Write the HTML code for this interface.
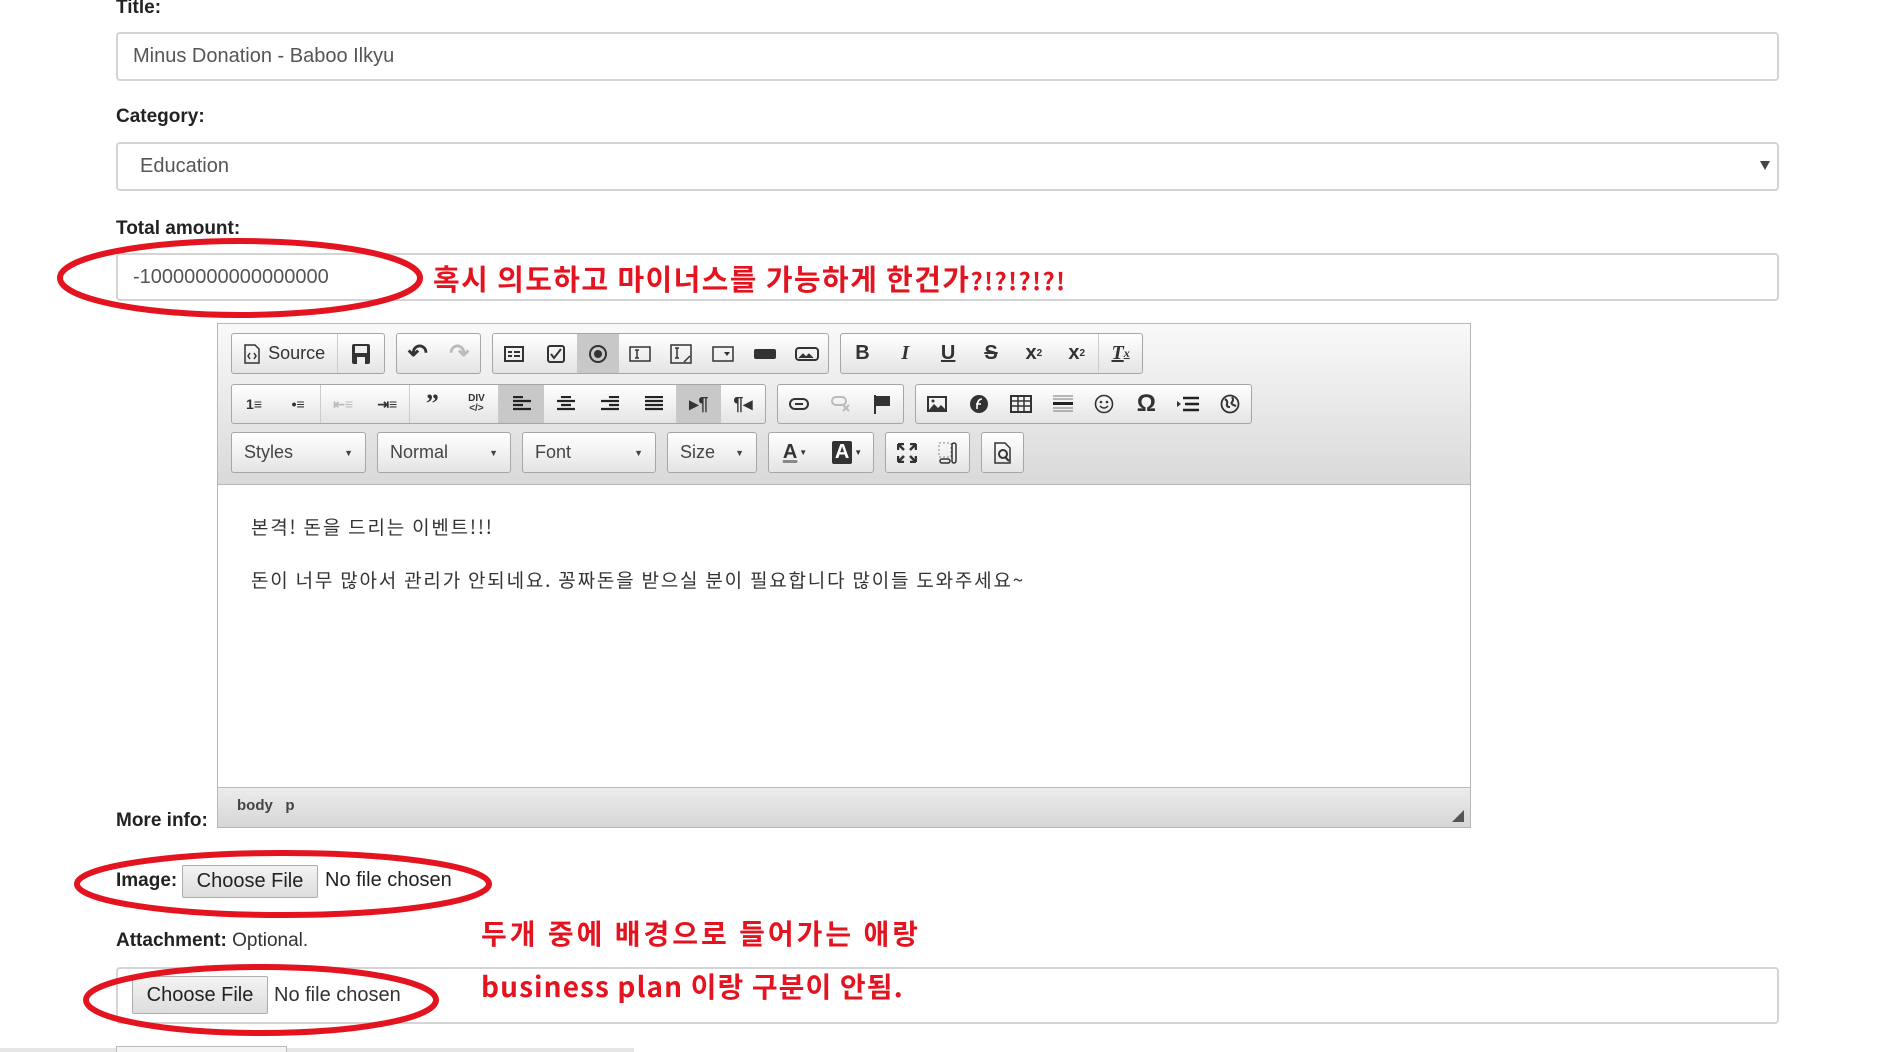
<!DOCTYPE html>
<html><head><meta charset="utf-8"><style>
*{box-sizing:border-box;margin:0;padding:0}
body{width:1891px;height:1052px;background:#fff;position:relative;overflow:hidden;font-family:"Liberation Sans","Noto Sans CJK KR",sans-serif;color:#333}
.a{position:absolute}
.lbl{font-weight:bold;font-size:19px;color:#222;line-height:20px}
.inp{border:2px solid #d4d4d4;border-radius:4px;background:#fff;font-size:20px;color:#555;padding-left:15px;display:flex;align-items:center}
.red{color:#e3141f;font-family:"Noto Sans CJK KR","Liberation Sans",sans-serif;font-weight:bold;white-space:nowrap}
.ed{left:217px;top:323px;width:1254px;height:505px;border:1px solid #b6b6b6;background:#fff}
.tb{left:218px;top:324px;width:1252px;height:161px;background:linear-gradient(#f9f9f9,#d9d9d9);border-bottom:1px solid #b6b6b6}
.g{position:absolute;border:1px solid #a6a6a6;border-radius:3px;background:linear-gradient(#fff,#e4e4e4);display:flex;align-items:center;justify-content:space-around;overflow:hidden;font-size:18px;color:#333;font-weight:bold}
.g span{display:flex;align-items:center;justify-content:center;height:100%;flex:1}
.p{background:#c8c8c8}
.cb{justify-content:space-between;padding:0 12px;font-weight:normal;font-size:18px;color:#444}
.cb i{font-style:normal;font-size:9px}
.fb{border:1px solid #adadad;background:linear-gradient(#f3f3f3,#dddddd);font-size:20px;color:#222;display:flex;align-items:center;justify-content:center;border-radius:2px}
.ct{font-family:'Noto Sans CJK KR',sans-serif;font-size:19px;color:#333;line-height:28px;letter-spacing:1.8px;white-space:nowrap}
</style></head><body>

<div class="a lbl" style="left:116px;top:-2px">Title:</div>
<div class="a inp" style="left:116px;top:32px;width:1663px;height:49px">Minus Donation - Baboo Ilkyu</div>

<div class="a lbl" style="left:116px;top:107px">Category:</div>
<div class="a inp" style="left:116px;top:142px;width:1663px;height:49px;padding-left:22px">Education</div>
<div class="a" style="left:1760px;top:161px;width:0;height:0;border-left:5px solid transparent;border-right:5px solid transparent;border-top:9px solid #444"></div>

<div class="a lbl" style="left:116px;top:219px">Total amount:</div>
<div class="a inp" style="left:116px;top:253px;width:1663px;height:48px">-10000000000000000</div>
<div class="a red" style="left:433px;top:258px;font-size:29px;line-height:40px;letter-spacing:1.4px">혹시 의도하고 마이너스를 가능하게 한건가<span style="font-size:24px">?!?!?!?!</span></div>

<div class="a ed"></div>
<div class="a tb"></div>
<!-- row1 -->
<div class="g" style="left:231px;top:333px;width:154px;height:41px;font-weight:normal">
 <span style="flex:3;font-size:18px"><svg width="16" height="20" viewBox="0 0 16 20" style="margin-right:8px"><path d="M1 1h10l4 4v14H1z" fill="none" stroke="#333" stroke-width="1.5"/><path d="M6 9l-2 3 2 3M10 9l2 3-2 3" fill="none" stroke="#333" stroke-width="1.5"/></svg>Source</span>
 <span style="border-left:1px solid #ccc;flex:1.3"><svg width="20" height="22" viewBox="0 0 20 22"><rect x="1" y="1" width="18" height="20" rx="2" fill="#333"/><rect x="4" y="3" width="12" height="7" fill="#eee"/><rect x="6" y="14" width="8" height="7" fill="#eee"/></svg></span>
</div>
<div class="g" style="left:396px;top:333px;width:85px;height:41px">
 <span style="font-size:24px;color:#333">&#x21B6;</span><span style="font-size:24px;color:#bbb">&#x21B7;</span>
</div>
<div class="g" style="left:492px;top:333px;width:337px;height:41px">
 <span><svg width="20" height="16"><rect x="1" y="1" width="18" height="14" fill="none" stroke="#333" stroke-width="2"/><path d="M4 6h4M10 6h6M4 10h4M10 10h6" stroke="#333" stroke-width="2"/></svg></span>
 <span><svg width="18" height="18"><rect x="1" y="1" width="16" height="16" rx="2" fill="none" stroke="#333" stroke-width="2"/><path d="M4 9l3 4 7-9" fill="none" stroke="#333" stroke-width="2"/></svg></span>
 <span class="p"><svg width="20" height="20"><circle cx="10" cy="10" r="8" fill="none" stroke="#333" stroke-width="2"/><circle cx="10" cy="10" r="4" fill="#333"/></svg></span>
 <span><svg width="22" height="16"><rect x="1" y="1" width="20" height="14" fill="none" stroke="#333" stroke-width="1.5"/><path d="M6 4h4M8 4v8M6 12h4" stroke="#333" stroke-width="1.5"/></svg></span>
 <span><svg width="22" height="20"><rect x="1" y="1" width="20" height="18" fill="none" stroke="#333" stroke-width="1.5"/><path d="M5 4h4M7 4v10M5 14h4M14 18l6-6" stroke="#333" stroke-width="1.5"/></svg></span>
 <span><svg width="22" height="16"><rect x="1" y="1" width="20" height="14" fill="none" stroke="#333" stroke-width="1.5"/><path d="M12 6h6l-3 4z" fill="#333"/></svg></span>
 <span><svg width="24" height="12"><rect x="1" y="1" width="22" height="10" rx="2" fill="#333"/></svg></span>
 <span><svg width="24" height="14"><rect x="1" y="1" width="22" height="12" rx="3" fill="none" stroke="#333" stroke-width="2"/><path d="M4 11l4-4 3 3 3-3 4 4" fill="#333" stroke="#333"/></svg></span>
</div>
<div class="g" style="left:840px;top:333px;width:303px;height:41px;font-size:20px">
 <span>B</span><span style="font-style:italic;font-family:'Liberation Serif',serif">I</span><span style="text-decoration:underline">U</span><span style="text-decoration:line-through">S</span><span>x<sub style="font-size:10px">2</sub></span><span>x<sup style="font-size:10px">2</sup></span><span style="border-left:1px solid #ccc;font-style:italic;text-decoration:underline;font-family:'Liberation Serif',serif">T<sub style="font-size:12px;text-decoration:none">x</sub></span>
</div>
<!-- row2 -->
<div class="g" style="left:231px;top:384px;width:535px;height:40px;font-size:14px">
 <span>1&#x2261;</span><span>&#x2022;&#x2261;</span><span style="border-left:1px solid #ccc;color:#bbb">&#x21E4;&#x2261;</span><span>&#x21E5;&#x2261;</span><span style="border-left:1px solid #ccc;font-size:26px;font-family:'Liberation Serif',serif">&#x201D;</span><span style="font-size:10px;line-height:10px;text-align:center">DIV<br>&lt;/&gt;</span>
 <span class="p" style="border-left:1px solid #ccc"><svg width="18" height="16"><path d="M0 1h10M0 5h18M0 9h10M0 13h18" stroke="#222" stroke-width="2.2"/></svg></span>
 <span><svg width="18" height="16"><path d="M4 1h10M0 5h18M4 9h10M0 13h18" stroke="#222" stroke-width="2.2"/></svg></span>
 <span><svg width="18" height="16"><path d="M8 1h10M0 5h18M8 9h10M0 13h18" stroke="#222" stroke-width="2.2"/></svg></span>
 <span><svg width="18" height="16"><path d="M0 1h18M0 5h18M0 9h18M0 13h18" stroke="#222" stroke-width="2.2"/></svg></span>
 <span class="p" style="border-left:1px solid #ccc;font-size:18px">&#x25B8;&#xB6;</span><span style="font-size:18px">&#xB6;&#x25C2;</span>
</div>
<div class="g" style="left:777px;top:384px;width:127px;height:40px">
 <span><svg width="20" height="12"><rect x="1" y="1" width="18" height="10" rx="5" fill="none" stroke="#333" stroke-width="2"/><path d="M6 6h8" stroke="#333" stroke-width="2"/></svg></span>
 <span><svg width="20" height="16"><rect x="1" y="1" width="14" height="8" rx="4" fill="none" stroke="#bbb" stroke-width="2"/><path d="M12 9l6 6M18 9l-6 6" stroke="#bbb" stroke-width="2"/></svg></span>
 <span><svg width="18" height="20"><path d="M2 1v19" stroke="#333" stroke-width="2"/><path d="M3 2h14v10H3z" fill="#333"/></svg></span>
</div>
<div class="g" style="left:915px;top:384px;width:337px;height:40px">
 <span><svg width="20" height="16"><rect x="1" y="1" width="18" height="14" fill="none" stroke="#333" stroke-width="2"/><path d="M2 14l5-6 4 4 3-3 5 5z" fill="#333"/><circle cx="6" cy="5" r="1.5" fill="#333"/></svg></span>
 <span><svg width="20" height="20"><circle cx="10" cy="10" r="9" fill="#333"/><path d="M13 5c-4 0-5 4-5 10M7 10h5" stroke="#fff" stroke-width="1.6" fill="none"/></svg></span>
 <span><svg width="22" height="18"><rect x="1" y="1" width="20" height="16" fill="none" stroke="#333" stroke-width="2"/><path d="M1 6h20M1 11h20M8 1v16M14 1v16" stroke="#333" stroke-width="1.5"/></svg></span>
 <span><svg width="20" height="20"><path d="M0 2h20M0 5h20M0 14h20M0 17h20" stroke="#777" stroke-width="1"/><path d="M0 9.5h20" stroke="#222" stroke-width="3"/></svg></span>
 <span><svg width="20" height="20"><circle cx="10" cy="10" r="8.5" fill="none" stroke="#333" stroke-width="1.6"/><circle cx="7" cy="8" r="1.3" fill="#333"/><circle cx="13" cy="8" r="1.3" fill="#333"/><path d="M6 12q4 4 8 0" fill="none" stroke="#333" stroke-width="1.5"/></svg></span>
 <span style="font-size:24px">&#x3A9;</span>
 <span><svg width="22" height="16"><path d="M0 5l4 3-4 3z" fill="#333"/><path d="M6 2h16M8 8h14M6 14h16" stroke="#222" stroke-width="2.5"/></svg></span>
 <span><svg width="20" height="20"><circle cx="10" cy="10" r="8.5" fill="none" stroke="#333" stroke-width="1.8"/><path d="M5 5q3 2 2 5t3 3M12 3q2 3 0 5t4 4" fill="none" stroke="#333" stroke-width="2"/></svg></span>
</div>
<!-- row3 -->
<div class="g cb" style="left:231px;top:432px;width:135px;height:41px">Styles<i>&#x25BC;</i></div>
<div class="g cb" style="left:377px;top:432px;width:134px;height:41px">Normal<i>&#x25BC;</i></div>
<div class="g cb" style="left:522px;top:432px;width:134px;height:41px">Font<i>&#x25BC;</i></div>
<div class="g cb" style="left:667px;top:432px;width:90px;height:41px">Size<i>&#x25BC;</i></div>
<div class="g" style="left:768px;top:432px;width:106px;height:41px;font-size:20px">
 <span><u style="text-decoration-color:#888;text-decoration-thickness:3px">A</u><i style="font-size:8px;font-style:normal;margin-left:2px">&#x25BC;</i></span>
 <span><b style="background:#333;color:#fff;padding:0 3px;border-radius:2px">A</b><i style="font-size:8px;font-style:normal;margin-left:2px">&#x25BC;</i></span>
</div>
<div class="g" style="left:885px;top:432px;width:85px;height:41px">
 <span><svg width="20" height="20"><path d="M1 1l6 6M1 1h6M1 1v6M19 1l-6 6M19 1h-6M19 1v6M1 19l6-6M1 19h6M1 19v-6M19 19l-6-6M19 19h-6M19 19v-6" stroke="#333" stroke-width="2.5"/></svg></span>
 <span><svg width="20" height="22"><rect x="1" y="1" width="12" height="14" fill="none" stroke="#888" stroke-dasharray="2 2"/><rect x="14" y="1" width="4" height="20" rx="2" fill="none" stroke="#333" stroke-width="1.5"/><rect x="2" y="17" width="10" height="4" rx="2" fill="none" stroke="#333" stroke-width="1.5"/></svg></span>
</div>
<div class="g" style="left:981px;top:432px;width:43px;height:41px">
 <span><svg width="18" height="22"><path d="M1 1h10l5 5v15H1z" fill="none" stroke="#333" stroke-width="1.5"/><circle cx="9" cy="12" r="4" fill="none" stroke="#333" stroke-width="2"/><path d="M11 15l4 4" stroke="#333" stroke-width="2"/></svg></span>
</div>

<div class="a ct" style="left:251px;top:513px">본격! 돈을 드리는 이벤트!!!</div>
<div class="a ct" style="left:251px;top:566px">돈이 너무 많아서 관리가 안되네요. 꽁짜돈을 받으실 분이 필요합니다 많이들 도와주세요~</div>

<div class="a" style="left:218px;top:787px;width:1252px;height:40px;background:linear-gradient(#ececec,#d6d6d6);border-top:1px solid #bbb"></div>
<div class="a" style="left:237px;top:797px;font-size:15px;font-weight:bold;color:#444">body&nbsp;&nbsp;&nbsp;p</div>
<div class="a" style="left:1452px;top:810px;width:0;height:0;border-left:12px solid transparent;border-bottom:12px solid #555"></div>

<div class="a lbl" style="left:116px;top:811px;font-weight:bold">More info:</div>

<div class="a lbl" style="left:116px;top:871px">Image:</div>
<div class="a fb" style="left:182px;top:865px;width:136px;height:33px">Choose File</div>
<div class="a" style="left:325px;top:869px;font-size:20px;color:#222">No file chosen</div>

<div class="a lbl" style="left:116px;top:931px">Attachment: <span style="font-weight:normal;color:#333">Optional.</span></div>
<div class="a" style="left:116px;top:967px;width:1663px;height:57px;border:2px solid #d4d4d4;border-radius:4px"></div>
<div class="a fb" style="left:132px;top:976px;width:136px;height:38px">Choose File</div>
<div class="a" style="left:274px;top:984px;font-size:20px;color:#333">No file chosen</div>

<div class="a red" style="left:481px;top:914px;font-size:28px;line-height:38px;letter-spacing:3px">두개 중에 배경으로 들어가는 애랑</div>
<div class="a red" style="left:481px;top:967px;font-size:28px;line-height:38px;letter-spacing:1.1px">business plan 이랑 구분이 안됨.</div>

<div class="a" style="left:0;top:1048px;width:634px;height:4px;background:#e6e6e6"></div>
<div class="a" style="left:116px;top:1046px;width:171px;height:6px;border:1px solid #bbb;border-bottom:none;background:#f4f4f4"></div>

<svg class="a" style="left:0;top:0" width="1891" height="1052">
 <g fill="none" stroke="#e3141f" stroke-width="6">
  <ellipse cx="240" cy="278" rx="180" ry="37"/>
  <ellipse cx="283" cy="884" rx="206" ry="31"/>
  <ellipse cx="261" cy="1000" rx="175" ry="33"/>
 </g>
</svg>
</body></html>
